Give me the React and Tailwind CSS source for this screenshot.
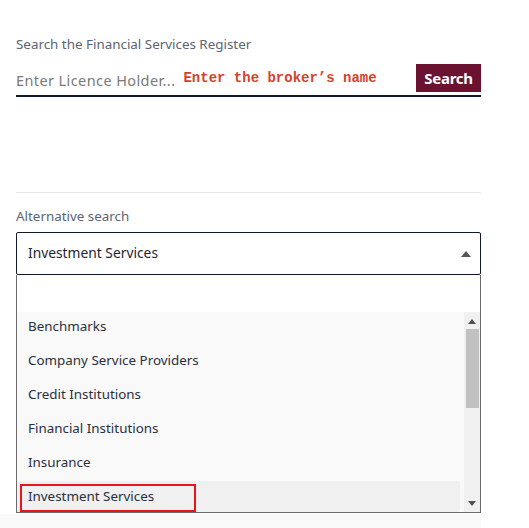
export default function App() {
  const items = [
    "Benchmarks",
    "Company Service Providers",
    "Credit Institutions",
    "Financial Institutions",
    "Insurance",
  ];
  return (
    <div className="w-[529px] h-[528px] bg-white overflow-hidden relative" style={{ fontFamily: '"Noto Sans", sans-serif' }}>
      <div className="ml-4 w-[465px] pt-[34px]">
        <div className="text-[13.4px] leading-[20px] text-[#5c6374]">Search the Financial Services Register</div>
        <div className="mt-[10px] flex items-start border-b-2 border-[#101a2c] h-[33px]">
          <div className="flex-1 flex items-center h-[28px] relative">
            <span className="text-[14.5px] tracking-[0.4px] text-[#7a7a7a] mt-[6px]">Enter Licence Holder...</span>
            <span className="ml-[8px] text-[14px] font-bold text-[#d3432b] whitespace-nowrap" style={{ fontFamily: '"Liberation Mono", monospace' }}>Enter the broker’s name</span>
          </div>
          <button className="h-[28px] w-[65px] bg-[#6b1230] text-white font-bold text-[15px] tracking-[-0.3px] flex items-center justify-center">Search</button>
        </div>
        <div className="mt-[95px] h-px bg-[#e6e6e6]"></div>
        <div className="mt-[13px] text-[13.4px] leading-[20px] text-[#5c6374]">Alternative search</div>
        <div className="mt-[6px] h-[43px] border border-[#101a2c] rounded-[2px] flex items-center justify-between pl-[11px] pr-[9px]">
          <span className="text-[13.8px] text-[#1f2433]">Investment Services</span>
          <svg width="10" height="6" viewBox="0 0 10 6"><path d="M5 0 L10 6 L0 6 Z" fill="#555" /></svg>
        </div>
        <div className="h-[238px] border-l border-r border-b border-[#6a6a6a] flex flex-col">
          <div className="h-[37px] bg-white"></div>
          <div className="flex-1 flex bg-[#f9f9f9]">
            <div className="flex-1 flex flex-col">
              {items.map((t) => (
                <div key={t} className="h-[34px] pt-[4px] leading-[20px] pl-[11px] text-[13.4px] text-[#2a2f40]">{t}</div>
              ))}
              <div className="mt-[-1px] h-[31px] bg-[#f0f0f0] rounded-r-[3px] mr-[4px] relative">
                <div className="absolute left-[3px] top-[3px] w-[176px] h-[28px] border-2 border-[#e8141c]"></div>
                <div className="pt-[5px] leading-[20px] pl-[11px] text-[13.4px] text-[#2a2f40]">Investment Services</div>
              </div>
            </div>
            <div className="w-[16px] bg-[#f0f0f0] flex flex-col items-center">
              <svg className="mt-[7px]" width="8" height="5" viewBox="0 0 8 5"><path d="M4 0 L8 5 L0 5 Z" fill="#505050" /></svg>
              <div className="mt-[5px] w-[13px] h-[79px] bg-[#c1c1c1]"></div>
              <div className="flex-1"></div>
              <svg className="mb-[6px]" width="8" height="5" viewBox="0 0 8 5"><path d="M0 0 L8 0 L4 5 Z" fill="#505050" /></svg>
            </div>
          </div>
        </div>
      </div>
      <div className="w-[481px] h-[15px] mt-[1px] bg-[#f9f9f9]"></div>
    </div>
  );
}
